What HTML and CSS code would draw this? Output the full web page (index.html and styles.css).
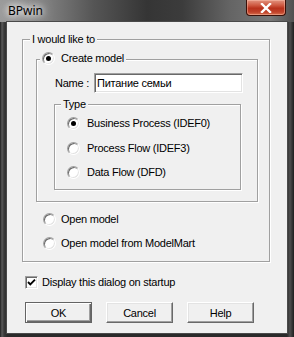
FILE: index.html
```html
<!DOCTYPE html>
<html>
<head>
<meta charset="utf-8">
<link rel="stylesheet" href="styles.css">
</head>
<body>
<div class="window">
  <div class="titlebar">
    <span class="title">BPwin</span>
    <div class="close">
      <svg width="12" height="10" viewBox="0 0 12 10"><path d="M2 1 L10 9 M10 1 L2 9" stroke="#fff" stroke-width="2.4" stroke-linecap="square" fill="none"/></svg>
    </div>
  </div>
  <div class="client">
    <div class="group outer">
      <span class="legend">I would like to</span>
      <div class="group create">
        <span class="legend opt"><span class="radio on"></span>Create model</span>
        <div class="name-row">
          <span class="name-label">Name :</span>
          <div class="input">Питание семьи</div>
        </div>
        <div class="group type">
          <span class="legend">Type</span>
          <div class="opt type-opt o1"><span class="radio on"></span>Business Process (IDEF0)</div>
          <div class="opt type-opt o2"><span class="radio"></span>Process Flow (IDEF3)</div>
          <div class="opt type-opt o3"><span class="radio"></span>Data Flow (DFD)</div>
        </div>
      </div>
      <div class="opt open"><span class="radio"></span>Open model</div>
      <div class="opt open"><span class="radio"></span>Open model from ModelMart</div>
    </div>
    <div class="check-row">
      <span class="checkbox"><svg width="11" height="11" viewBox="0 0 11 11"><path d="M2 5 L4.3 7.3 L9 2.6" stroke="#000" stroke-width="1.9" fill="none"/></svg></span>
      Display this dialog on startup
    </div>
    <div class="buttons">
      <div class="btn default">OK</div>
      <div class="btn">Cancel</div>
      <div class="btn">Help</div>
    </div>
  </div>
</div>
</body>
</html>
```
FILE: styles.css
```css
* { box-sizing: border-box; }
body {
  margin: 0;
  font-family: "Liberation Sans", Arial, sans-serif;
  font-size: 11px;
  color: #000;
}
.window {
  width: 294px;
  height: 337px;
  display: flex;
  flex-direction: column;
  overflow: hidden;
  background: linear-gradient(90deg, #1e1e1e 0, #5a5a5a 2px, #3a3a3a 4px, #2a2a2a 7px, #2a2a2a 287px, #4e4e4e 290px, #1e1e1e 294px);
}
.titlebar {
  height: 22px;
  flex: none;
  display: flex;
  justify-content: space-between;
  align-items: flex-start;
  padding: 0 8px 0 8px;
  background: linear-gradient(90deg, #9a9a9a 0, #848484 14%, #555 32%, #353535 50%, #3c3c3c 62%, #646464 78%, #787878 92%, #505050 100%);
}
.title {
  font-family: "Noto Sans", "Open Sans", sans-serif;
  font-size: 12px;
  line-height: 22px;
  color: #000;
  text-shadow: 0 0 6px #fff, 0 0 10px #fff, 0 0 14px rgba(255,255,255,.8);
}
.close {
  width: 40px;
  height: 16px;
  border: 1px solid #3a1008;
  border-top: none;
  border-radius: 0 0 4px 4px;
  background: linear-gradient(#e29480 0, #cf5a42 35%, #b8321c 55%, #c0422a 80%, #d8704e 100%);
  box-shadow: inset 0 0 0 1px rgba(255,200,180,.45);
  display: flex;
  align-items: center;
  justify-content: center;
}
.client {
  margin: 0 7px;
  height: 311px;
  background: #f0f0f0;
  box-shadow: 0 0 0 1px #4a4a4a;
  letter-spacing: -0.25px;
}
.group {
  border: 1px solid #a0a0a0;
  box-shadow: inset 1px 1px 0 #fff, 1px 1px 0 #fff;
}
.legend {
  display: flex;
  align-items: center;
  width: max-content;
  height: 14px;
  line-height: 14px;
  padding: 0 2px;
  background: #f0f0f0;
}
.outer {
  margin: 17px 0 0 15px;
  width: 248px;
  height: 223px;
}
.outer > .legend { margin: -8px 0 0 7px; }
.create {
  margin: 13px 0 0 13px;
  width: 222px;
  height: 143px;
}
.create > .legend { margin: -9px 0 0 3px; gap: 6px; }
.name-row {
  margin: 8px 0 0 18px;
  display: flex;
  align-items: center;
  height: 20px;
}
.name-label { width: 39px; }
.input {
  width: 149px;
  height: 20px;
  background: #fff;
  border: 1px solid;
  border-color: #a0a0a0 #fff #fff #a0a0a0;
  box-shadow: inset 1px 1px 0 #696969, inset -1px -1px 0 #e3e3e3;
  padding-left: 2px;
  line-height: 18px;
}
.type {
  margin: 11px 0 0 17px;
  width: 187px;
  height: 86px;
}
.type > .legend { margin: -8px 0 0 6px; }
.opt {
  display: flex;
  align-items: center;
  height: 14px;
  line-height: 14px;
}
.type-opt { margin-left: 12px; gap: 7px; }
.o1 { margin-top: 5px; }
.o2 { margin-top: 11px; }
.o3 { margin-top: 10px; }
.open { margin: 10px 0 0 20px; gap: 5px; }
.radio {
  flex: none;
  position: relative;
  width: 13px;
  height: 13px;
  border-radius: 50%;
  background: #fff;
  border: 1px solid;
  border-color: #a0a0a0 #fff #fff #a0a0a0;
  box-shadow: inset 1px 1px 0 #696969, inset -1px -1px 0 #e3e3e3;
}
.radio.on::after {
  content: "";
  position: absolute;
  left: 3px;
  top: 3px;
  width: 5px;
  height: 5px;
  border-radius: 50%;
  background: #000;
}
.check-row {
  margin: 13px 0 0 18px;
  display: flex;
  align-items: center;
  gap: 4px;
  height: 14px;
  line-height: 14px;
}
.checkbox {
  flex: none;
  width: 13px;
  height: 13px;
  background: #fff;
  border: 1px solid;
  border-color: #a0a0a0 #fff #fff #a0a0a0;
  box-shadow: inset 1px 1px 0 #696969, inset -1px -1px 0 #e3e3e3;
  display: flex;
  align-items: center;
  justify-content: center;
}
.checkbox svg { display: block; }
.buttons {
  margin: 13px 0 0 18px;
  display: flex;
  gap: 14px;
}
.btn {
  width: 67px;
  height: 21px;
  background: #f0f0f0;
  border: 1px solid;
  border-color: #fff #696969 #696969 #fff;
  box-shadow: inset -1px -1px 0 #a0a0a0, inset 1px 1px 0 #e3e3e3;
  display: flex;
  align-items: center;
  justify-content: center;
}
.btn.default {
  border: 1px solid #646464;
  box-shadow: inset 1px 1px 0 #fff, inset -1px -1px 0 #696969, inset -2px -2px 0 #a0a0a0;
}
```
